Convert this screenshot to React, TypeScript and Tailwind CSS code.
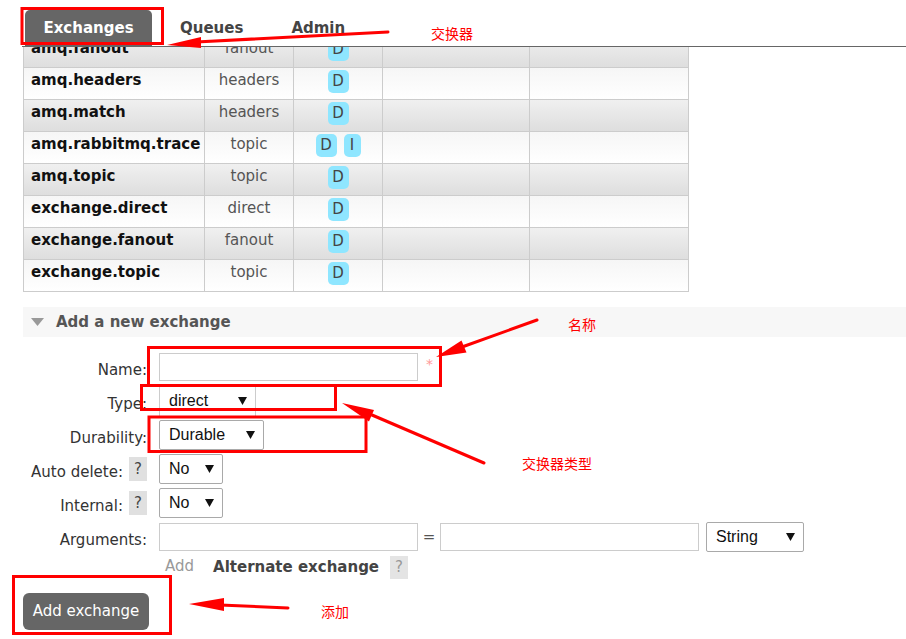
import React from "react";

const rows = [
  { n: "amq.fanout", t: "fanout", f: ["D"], g: true },
  { n: "amq.headers", t: "headers", f: ["D"], g: false },
  { n: "amq.match", t: "headers", f: ["D"], g: true },
  { n: "amq.rabbitmq.trace", t: "topic", f: ["D", "I"], g: false },
  { n: "amq.topic", t: "topic", f: ["D"], g: true },
  { n: "exchange.direct", t: "direct", f: ["D"], g: false },
  { n: "exchange.fanout", t: "fanout", f: ["D"], g: true },
  { n: "exchange.topic", t: "topic", f: ["D"], g: false },
];

const Caret = () => (
  <svg width="9" height="8" viewBox="0 0 9 8" className="shrink-0">
    <path d="M0 0 L9 0 L4.5 8 Z" fill="#111" />
  </svg>
);

const Select = ({ label, w, h }: { label: string; w: string; h: string }) => (
  <div
    className={`${w} ${h} flex items-center justify-between pl-[9px] pr-[8px] border border-[#a9a9a9] rounded-[2px] bg-white text-[16px] text-[#111]`}
    style={{ fontFamily: '"Liberation Sans", Arial, sans-serif' }}
  >
    <span>{label}</span>
    <Caret />
  </div>
);

const Help = ({ light }: { light?: boolean }) => (
  <span
    className={
      light
        ? "inline-flex w-[18px] h-[23px] items-center justify-center bg-[#e4e4e4] text-[#999] text-[15px]"
        : "inline-flex w-[18px] h-[24px] items-center justify-center bg-[#e0e0e0] text-[#444] text-[15px]"
    }
  >
    ?
  </span>
);

export default function App() {
  return (
    <div
      className="relative w-[906px] h-[639px] overflow-hidden bg-white text-[15px] text-[#222]"
      style={{ fontFamily: '"DejaVu Sans", Verdana, sans-serif' }}
    >
      {/* Tabs */}
      <div className="ml-[22px] h-[47px] border-b border-[#666] flex items-end pl-[3px]">
        <div className="w-[127px] h-[36px] bg-[#666] rounded-t-[5px] flex items-center justify-center text-white font-bold">
          Exchanges
        </div>
        <div className="h-[36px] flex items-center pl-[28px] text-[#444] font-bold">Queues</div>
        <div className="h-[36px] flex items-center pl-[48px] text-[#444] font-bold">Admin</div>
      </div>

      {/* Table */}
      <div className="ml-[23px] w-[666px] h-[245px] overflow-hidden">
        <div className="-mt-[11px]">
          {rows.map((r) => (
            <div
              key={r.n}
              className={
                r.g
                  ? "flex h-[32px] border-l border-b border-[#ccc] bg-gradient-to-b from-[#f0f0f0] to-[#dedede]"
                  : "flex h-[32px] border-l border-b border-[#ccc] bg-gradient-to-b from-[#f6f6f6] to-[#ffffff]"
              }
            >
              <div className="w-[181px] border-r border-[#ccc] pl-[7px] pt-[2px] leading-[20px] font-bold text-[#111] whitespace-nowrap">
                {r.n}
              </div>
              <div className="w-[89px] border-r border-[#ccc] pt-[2px] leading-[20px] text-center text-[#555]">
                {r.t}
              </div>
              <div className="w-[89px] border-r border-[#ccc] pt-[2px] flex justify-center gap-[7px]">
                {r.f.map((b) => (
                  <span
                    key={b}
                    className={
                      b === "I"
                        ? "h-[23px] w-[17px] rounded-[5px] bg-[#8fe6ff] text-[#444] flex items-center justify-center"
                        : "h-[23px] w-[21px] rounded-[5px] bg-[#8fe6ff] text-[#444] flex items-center justify-center"
                    }
                  >
                    {b}
                  </span>
                ))}
              </div>
              <div className="w-[147px] border-r border-[#ccc]" />
              <div className="w-[159px] border-r border-[#ccc]" />
            </div>
          ))}
        </div>
      </div>

      {/* Section header */}
      <div className="mt-[15px] ml-[23px] h-[30px] bg-[#f7f7f7] flex items-center pl-[8px] gap-[12px]">
        <svg width="13" height="8" viewBox="0 0 13 8">
          <path d="M0 0 L13 0 L6.5 8 Z" fill="#999" />
        </svg>
        <span className="font-bold text-[#555]">Add a new exchange</span>
      </div>

      {/* Form */}
      <div className="mt-[13px] ml-[23px] flex flex-col">
        <div className="flex items-center h-[34px]">
          <div className="w-[124px] pt-[7px] text-right text-[#333]">Name:</div>
          <div className="ml-[12px] w-[259px] h-[28px] border border-[#ccc] bg-white" />
          <span className="ml-[8px] -mt-[5px] text-[#f99] text-[14px]">*</span>
        </div>
        <div className="flex items-center h-[34px]">
          <div className="w-[124px] pt-[7px] text-right text-[#333]">Type:</div>
          <div className="ml-[12px] w-[97px] h-[31px] border border-[#ccc] flex items-center justify-between pl-[9px] pr-[8px] text-[16px] text-[#111]" style={{ fontFamily: '"Liberation Sans", Arial, sans-serif' }}>
            <span>direct</span>
            <Caret />
          </div>
        </div>
        <div className="flex items-center h-[34px]">
          <div className="w-[124px] pt-[7px] text-right text-[#333]">Durability:</div>
          <div className="ml-[12px]">
            <Select label="Durable" w="w-[105px]" h="h-[30px]" />
          </div>
        </div>
        <div className="flex items-center h-[34px]">
          <div className="w-[124px] flex justify-end items-center gap-[6px]">
            <span className="pt-[7px] text-[#333]">Auto delete:</span>
            <Help />
          </div>
          <div className="ml-[12px]">
            <Select label="No" w="w-[64px]" h="h-[30px]" />
          </div>
        </div>
        <div className="flex items-center h-[34px]">
          <div className="w-[124px] flex justify-end items-center gap-[6px]">
            <span className="pt-[7px] text-[#333]">Internal:</span>
            <Help />
          </div>
          <div className="ml-[12px]">
            <Select label="No" w="w-[64px]" h="h-[30px]" />
          </div>
        </div>
        <div className="flex items-center h-[34px]">
          <div className="w-[124px] pt-[7px] text-right text-[#333]">Arguments:</div>
          <div className="ml-[12px] w-[259px] h-[28px] border border-[#ccc] bg-white" />
          <span className="w-[22px] text-center text-[#555]">=</span>
          <div className="w-[259px] h-[28px] border border-[#ccc] bg-white" />
          <div className="ml-[7px]">
            <Select label="String" w="w-[98px]" h="h-[30px]" />
          </div>
        </div>
        <div className="flex items-center h-[26px] pl-[142px]">
          <span className="text-[#999] pb-[2px]">Add</span>
          <span className="ml-[19px] font-bold text-[#444]">Alternate exchange</span>
          <span className="ml-[11px]">
            <Help light />
          </span>
        </div>
        <div className="mt-[13px]">
          <button className="w-[126px] h-[37px] rounded-[6px] bg-[#666] text-white text-[15px]">
            Add exchange
          </button>
        </div>
      </div>

      {/* Annotations overlay */}
      <svg
        className="absolute left-0 top-0 pointer-events-none"
        width="906"
        height="639"
        viewBox="0 0 906 639"
      >
        <g fill="none" stroke="#ff0000" strokeWidth="3">
          <rect x="22" y="8.5" width="140.5" height="35" />
          <rect x="148.5" y="347.5" width="292" height="38" />
          <rect x="141.5" y="385.5" width="194" height="24" />
          <rect x="149" y="417" width="217" height="34.5" />
          <rect x="13.5" y="576.5" width="157" height="57" />
        </g>
        <g stroke="#ff0000" strokeWidth="3" strokeLinecap="round">
          <line x1="388" y1="32" x2="196" y2="42" />
          <line x1="537" y1="320" x2="462" y2="347" />
          <line x1="484" y1="463" x2="372" y2="415" />
          <line x1="288" y1="608" x2="220" y2="605" />
        </g>
        <g fill="#ff0000">
          <polygon points="167,45 201,37 201,48" />
          <polygon points="436,357 466.5,352.5 461.5,340.5" />
          <polygon points="342,403 374,410 369,421.5" />
          <polygon points="189,604 224,598 224,611" />
        </g>
      </svg>
      <span
        className="absolute left-[431px] top-[24px] text-[14px] leading-[18px] text-[#ff0000]"
        style={{ fontFamily: '"Noto Sans CJK SC", sans-serif' }}
      >
        交换器
      </span>
      <span
        className="absolute left-[568px] top-[315px] text-[14px] leading-[18px] text-[#ff0000]"
        style={{ fontFamily: '"Noto Sans CJK SC", sans-serif' }}
      >
        名称
      </span>
      <span
        className="absolute left-[522px] top-[454px] text-[14px] leading-[18px] text-[#ff0000]"
        style={{ fontFamily: '"Noto Sans CJK SC", sans-serif' }}
      >
        交换器类型
      </span>
      <span
        className="absolute left-[321px] top-[602px] text-[14px] leading-[18px] text-[#ff0000]"
        style={{ fontFamily: '"Noto Sans CJK SC", sans-serif' }}
      >
        添加
      </span>
    </div>
  );
}
